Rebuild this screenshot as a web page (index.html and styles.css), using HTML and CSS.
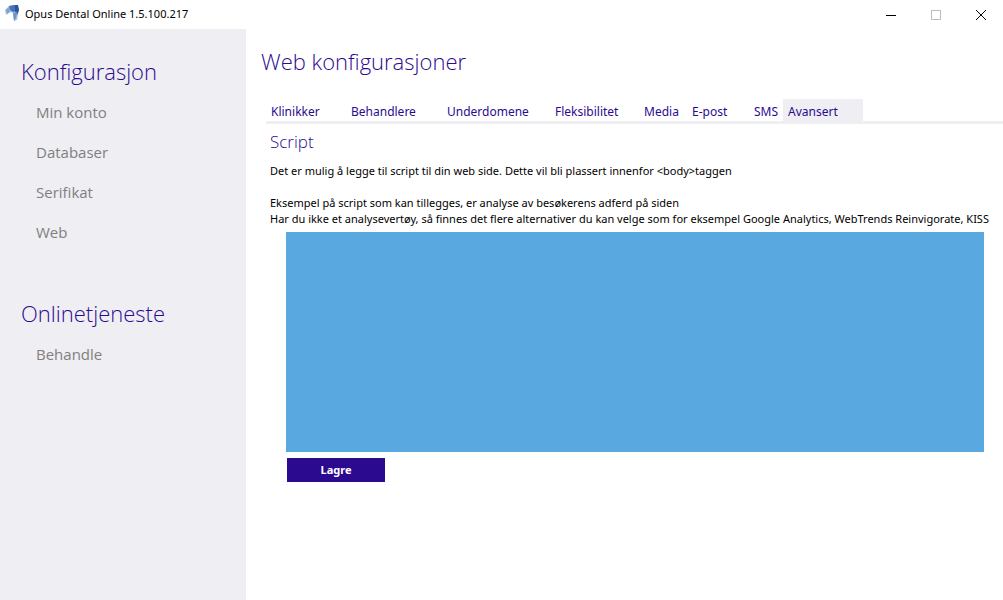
FILE: index.html
```html
<!DOCTYPE html>
<html lang="no">
<head>
<meta charset="utf-8">
<title>Opus Dental Online</title>
<link rel="stylesheet" href="styles.css">
</head>
<body>
<header class="titlebar">
  <svg class="logo" viewBox="0 0 16 18" aria-hidden="true">
    <path fill="#a9c3e4" d="M0 6 L4 2 L13 1 L14 6 L12 16 L9 17 L8 9 L5 8 L1 11 Z"/>
    <path fill="#4674b8" d="M4 2 L9 1 L13 1 L12 7 L8 8 L5 6 Z"/>
    <path fill="#7fa3d3" d="M1 6 L4 3 L5 8 L2 10 Z"/>
    <path fill="#2b5598" d="M10 1 L13 1 L14 6 L12 11 L10 7 Z"/>
    <path fill="#6d94ca" d="M8 9 L12 8 L11 14 L9 17 Z"/>
  </svg>
  <span class="title">Opus Dental Online 1.5.100.217</span>
  <div class="window-buttons">
    <button class="window-button" type="button" aria-label="Minimer"><svg viewBox="0 0 10 10"><path d="M0 5.5H10"/></svg></button>
    <button class="window-button" type="button" aria-label="Maksimer" disabled><svg viewBox="0 0 10 10"><path d="M.5 .5H9.500V9.500H.5Z"/></svg></button>
    <button class="window-button" type="button" aria-label="Lukk"><svg viewBox="0 0 10 10"><path d="M0 0L10 10M10 0L0 10"/></svg></button>
  </div>
</header>
<div class="app">
  <nav class="sidebar">
    <section class="group">
      <h2 class="heading">Konfigurasjon</h2>
      <a class="nav-link" href="#">Min konto</a>
      <a class="nav-link" href="#">Databaser</a>
      <a class="nav-link" href="#">Serifikat</a>
      <a class="nav-link" href="#">Web</a>
    </section>
    <section class="group">
      <h2 class="heading">Onlinetjeneste</h2>
      <a class="nav-link" href="#">Behandle</a>
    </section>
  </nav>
  <main class="content">
    <h1 class="heading page-title">Web konfigurasjoner</h1>
    <div class="tabs" role="tablist">
      <button class="tab" type="button" role="tab">Klinikker</button>
      <button class="tab tab-wide" type="button" role="tab">Behandlere</button>
      <button class="tab tab-wider" type="button" role="tab">Underdomene</button>
      <button class="tab tab-medium" type="button" role="tab">Fleksibilitet</button>
      <button class="tab tab-narrow" type="button" role="tab">Media</button>
      <button class="tab tab-short" type="button" role="tab">E-post</button>
      <button class="tab tab-tiny" type="button" role="tab">SMS</button>
      <button class="tab active" type="button" role="tab" aria-selected="true">Avansert</button>
    </div>
    <section class="panel">
      <h3 class="panel-title"><label for="script">Script</label></h3>
      <div class="help">
        <p>Det er mulig å legge til script til din web side. Dette vil bli plassert innenfor &lt;body&gt;taggen</p>
        <p class="spaced">Eksempel på script som kan tillegges, er analyse av besøkerens adferd på siden</p>
        <p>Har du ikke et analysevertøy, så finnes det flere alternativer du kan velge som for eksempel Google Analytics, WebTrends Reinvigorate, KISS</p>
      </div>
      <textarea class="script" id="script"></textarea>
      <button class="save" type="button">Lagre</button>
    </section>
  </main>
</div>
</body>
</html>
```
FILE: styles.css
```css
* { box-sizing: border-box; }
body {
  margin: 0;
  min-height: 100vh;
  display: flex;
  flex-direction: column;
  background: #fff;
  color: #000;
  font: 11px/16px "Noto Sans", "Open Sans", sans-serif;
}
h1, h2, h3, p { margin: 0; }
button { border: 0; padding: 0; font: inherit; }
.titlebar { display: flex; align-items: center; height: 29px; padding-left: 5px; }
.logo { width: 16px; height: 18px; margin: 0 4px 3px 0; }
.title { padding-bottom: 2px; }
.window-buttons { display: flex; margin-left: auto; }
.window-button { width: 45px; height: 26px; background: none; display: grid; place-items: center; }
.window-button svg { width: 10px; height: 10px; stroke: #000; fill: none; }
.window-button:disabled svg { stroke: #bbb; }
.app { flex: 1; display: flex; }
.sidebar { flex: 0 0 246px; background: #efeef3; padding: 25px 21px; }
.heading { color: #2c0a8f; font-family: "Open Sans", sans-serif; font-size: 22px; line-height: 34px; font-weight: 300; }
.group { margin-bottom: 44px; }
.nav-link { display: block; padding-left: 15px; font-family: "Open Sans", sans-serif; font-size: 15px; line-height: 40px; height: 40px; color: #808080; text-decoration: none; }
.group .heading { margin-bottom: 4px; }
.content { flex: 1; min-width: 0; }
.page-title { padding: 15px 15px 21px; }
.tabs { display: flex; margin-left: 20px; border-bottom: 3px solid #efeef3; }
.tab { width: 80px; height: 22px; padding: 4px 0 0 5px; background: none; color: #2c0a8f; font-size: 12px; text-align: left; white-space: nowrap; }
.tab-wide { width: 96px; }
.tab-wider { width: 108px; }
.tab-medium { width: 89px; }
.tab-narrow { width: 48px; }
.tab-short { width: 62px; }
.tab-tiny { width: 34px; }
.active { background: #efeef3; }
.panel { padding: 6px 3px 0 24px; }
.panel-title { color: #2c0a8f; font-family: "Open Sans", sans-serif; font-size: 17px; line-height: 24px; font-weight: 300; margin-bottom: 9px; }
.help { overflow: hidden; white-space: nowrap; }
.spaced { margin-top: 16px; }
.script { display: block; width: calc(100% - 32px); height: 220px; margin: 5px 16px 6px; border: 0; background: #59a8df; resize: none; }
.save { display: block; width: 98px; height: 24px; margin-left: 17px; background: #2c0a8f; color: #fff; font-weight: 700; }
```
